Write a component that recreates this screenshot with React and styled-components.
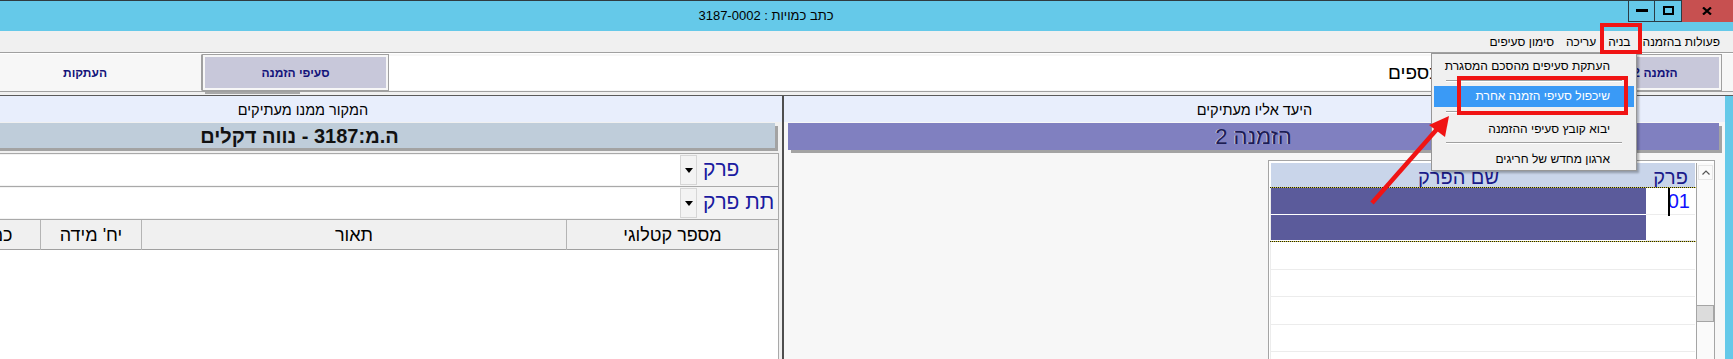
import React from "react";
import styled, { createGlobalStyle } from "styled-components";

const Global = createGlobalStyle`
  html, body { margin: 0; padding: 0; overflow: hidden; background: #f0f0f0; }
  * { box-sizing: border-box; }
`;

const FONT = `"Liberation Sans", "DejaVu Sans", Arial, sans-serif`;

const Window = styled.div`
  position: relative;
  width: 1733px;
  height: 359px;
  overflow: hidden;
  font-family: ${FONT};
  background: #f0f0f0;
  display: flex;
  flex-direction: column;
`;

const TitleBar = styled.div`
  height: 31px;
  border-top: 1px solid #2f3b40;
  background: #65c9e9;
  display: flex;
  align-items: flex-start;
  flex-shrink: 0;
`;

const TitleText = styled.div`
  flex: 1;
  direction: rtl;
  text-align: center;
  padding-right: 96px;
  font-size: 13px;
  line-height: 29px;
  color: #000;
`;

const Controls = styled.div`
  display: flex;
  height: 21px;
  margin-top: -1px;
`;

const CtrlBtn = styled.div`
  width: ${(p) => p.$w}px;
  height: 22px;
  display: flex;
  align-items: center;
  justify-content: center;
  background: ${(p) => (p.$close ? "#c75050" : "transparent")};
  border: 1px solid ${(p) => (p.$close ? "#c75050" : "#2b3b44")};
  border-left-width: ${(p) => (p.$first ? 1 : 0)}px;
  border-top: none;
`;

const MenuBar = styled.div`
  height: 22px;
  flex-shrink: 0;
  display: flex;
  direction: rtl;
  padding-right: 7px;
  background: #f0f0f0;
  border-bottom: 1px solid #a0a0a0;
`;

const MenuItem = styled.div`
  padding: 0 6px;
  font-size: 12px;
  line-height: 22px;
  color: #000;
  white-space: nowrap;
`;

const TabsRow = styled.div`
  height: 39px;
  flex-shrink: 0;
  display: flex;
  background: #f7f7f7;
  border-top: 1px solid #ffffff;
  border-bottom: 1px solid #a0a0a0;
`;

const Tab = styled.div`
  width: ${(p) => p.$w}px;
  flex-shrink: 0;
  display: flex;
  padding: 2px;
  border: 1px solid ${(p) => (p.$sel ? "#a0a0a0" : "transparent")};
  border-right-color: #a0a0a0;
`;

const TabFace = styled.div`
  flex: 1;
  display: flex;
  align-items: center;
  justify-content: center;
  padding-right: ${(p) => p.$pr || 0}px;
  background: ${(p) => (p.$sel ? "#c8c8da" : "transparent")};
  direction: rtl;
  font-size: 12px;
  font-weight: bold;
  color: #14147a;
`;

const Field = styled.div`
  flex: 1;
  background: #fff;
  margin: 2px 0 1px;
  direction: rtl;
  text-align: left;
  padding-left: 999px;
  font-size: 19px;
  line-height: 33px;
  color: #000;
  white-space: nowrap;
  overflow: hidden;
`;

const TabTail = styled.div`
  width: 11px;
  flex-shrink: 0;
`;

const TabGap = styled.div`
  height: 4px;
  flex-shrink: 0;
  background: #f0f0f0;
  border-bottom: 1px solid #5a5a5a;
  display: flex;
`;

const TabMark = styled.div`
  width: 95px;
  height: 2px;
  margin-left: 205px;
  background: #a8a8a8;
`;

const Panels = styled.div`
  flex: 1;
  display: flex;
  min-height: 0;
`;

const LeftPanel = styled.div`
  width: 958px;
  margin-left: -176px;
  flex-shrink: 0;
  display: flex;
  flex-direction: column;
  background: #f0f0f0;
`;

const Divider = styled.div`
  width: 2px;
  flex-shrink: 0;
  background: #4e4e4e;
`;

const RightPanel = styled.div`
  flex: 1;
  display: flex;
  flex-direction: column;
  background: #f7f7f7;
`;

const Frame = styled.div`
  width: 8px;
  flex-shrink: 0;
  background: #65c9e9;
`;

const PanelHeader = styled.div`
  height: 26px;
  flex-shrink: 0;
  background: #e8eefc;
  direction: rtl;
  text-align: center;
  font-size: 14.5px;
  line-height: 29px;
  color: #000;
`;

const Bar = styled.div`
  height: ${(p) => p.$h}px;
  margin: 1px ${(p) => p.$mr}px 0 ${(p) => p.$ml}px;
  background: ${(p) => p.$bg};
  box-shadow: 3px 3px 0 #a3a3a3;
  direction: rtl;
  text-align: center;
  white-space: nowrap;
  flex-shrink: 0;
`;

const SourceTitle = styled.span`
  font-size: 20px;
  font-weight: bold;
  line-height: 27px;
  color: #111;
`;

const TargetTitle = styled.span`
  font-size: 22px;
  line-height: 28px;
  color: #1c1c55;
  text-shadow: -1px 0 0 rgba(255, 255, 255, 0.55);
`;

const SourceBody = styled.div`
  flex: 1;
  margin: 5px 3px 0 0;
  border-right: 1px solid #a9a9a9;
  display: flex;
  flex-direction: column;
  background: #f3f3f3;
`;

const FormRow = styled.div`
  height: 33px;
  flex-shrink: 0;
  display: grid;
  grid-template-columns: 1fr 17px 81px;
  border-top: 1px solid #a9a9a9;
  padding: 1px 0 2px;
`;

const ComboBox = styled.div`
  background: #fff;
`;

const DropBtn = styled.div`
  display: flex;
  align-items: center;
  justify-content: center;
  background: #f3f3f3;
  border: 1px solid #d6d6d6;
`;

const Label = styled.div`
  padding: 0 0 2px 6px;
  text-align: left;
  direction: ltr;
  font-size: 21px;
  line-height: 28px;
  color: #1a1aa0;
  white-space: nowrap;
`;

const SrcGrid = styled.div`
  flex: 1;
  display: flex;
  flex-direction: column;
  background: #fff;
  border-top: 1px solid #a9a9a9;
`;

const SrcHead = styled.div`
  height: 30px;
  flex-shrink: 0;
  display: grid;
  direction: rtl;
  grid-template-columns: 212px 425px 101px 95px 1fr;
  background: #f0f0f0;
  border-bottom: 1px solid #a0a0a0;
`;

const SrcHeadCell = styled.div`
  border-left: 1px solid #b4b4b4;
  text-align: center;
  font-size: 18px;
  line-height: 30px;
  color: #000;
  white-space: nowrap;
`;

const TargetBody = styled.div`
  flex: 1;
  display: flex;
  justify-content: flex-end;
  padding: 10px 10px 0 0;
  min-height: 0;
`;

const GridBox = styled.div`
  width: 447px;
  border: 1px solid #a5a5a5;
  border-bottom: none;
  padding: 2px 0 0 1px;
  background: #fff;
  display: flex;
`;

const Table = styled.div`
  flex: 1;
  display: flex;
  flex-direction: column;
`;

const Row = styled.div`
  display: grid;
  grid-template-columns: 376px 49px;
  height: ${(p) => p.$h || 27}px;
  flex-shrink: 0;
`;

const HeadCell = styled.div`
  background: #c9d5ea;
  border-left: ${(p) => (p.$sep ? "1px solid #fff" : "none")};
  direction: rtl;
  text-align: center;
  font-size: 20px;
  line-height: 22px;
  padding-top: 3px;
  color: #1b1b8a;
  white-space: nowrap;
`;

const FocusLine = styled.div`
  height: 1px;
  flex-shrink: 0;
  background: repeating-linear-gradient(90deg, #1a1a1a 0 1px, #d8d040 1px 2px);
`;

const Cell = styled.div`
  background: ${(p) => (p.$sel ? "#5b5b9b" : "#fff")};
  border-bottom: 1px solid ${(p) => (p.$sel ? "#ffffff" : "#ececec")};
  border-left: ${(p) => (p.$sep ? "1px solid #ececec" : "none")};
  display: flex;
  align-items: center;
  justify-content: flex-end;
  padding-right: 5px;
`;

const Code = styled.span`
  position: relative;
  font-size: 20px;
  color: #1010ff;
  &::before {
    content: "";
    position: absolute;
    left: 0;
    top: -2px;
    bottom: -3px;
    width: 2px;
    background: #000;
  }
`;

const Scroll = styled.div`
  width: 18px;
  flex-shrink: 0;
  background: #fafafa;
  border-left: 1px solid #a5a5a5;
  display: flex;
  flex-direction: column;
  padding-top: 2px;
  gap: 125px;
`;

const ScrollUp = styled.div`
  height: 15px;
  margin: 0 1px;
  border: 1px solid #e6e6e6;
  display: flex;
  align-items: center;
  justify-content: center;
`;

const Thumb = styled.div`
  height: 17px;
  background: #dcdcdc;
  border: 1px solid #a5a5a5;
  margin-left: -1px;
`;

const Popup = styled.div`
  position: absolute;
  left: 1431px;
  top: 53px;
  width: 206px;
  background: #f0f0f0;
  border: 1px solid #979797;
  box-shadow: 2px 2px 2px rgba(0, 0, 0, 0.28);
  padding: 2px 2px 0;
  display: flex;
  flex-direction: column;
  direction: rtl;
`;

const PopItem = styled.div`
  height: ${(p) => p.$h}px;
  padding-right: 24px;
  font-size: 12px;
  line-height: ${(p) => p.$h}px;
  white-space: nowrap;
  color: ${(p) => (p.$hot ? "#fff" : "#000")};
  background: ${(p) => (p.$hot ? "#3a9af6" : "transparent")};
`;

const PopSep = styled.div`
  height: 1px;
  margin: ${(p) => p.$t}px 12px ${(p) => p.$b}px;
  background: #a0a0a0;
  border-bottom: 1px solid #fff;
  box-sizing: content-box;
`;

const RedBox = styled.div`
  position: absolute;
  left: ${(p) => p.$x}px;
  top: ${(p) => p.$y}px;
  width: ${(p) => p.$w}px;
  height: ${(p) => p.$h}px;
  border: 4px solid #f01414;
  pointer-events: none;
`;

const Arrow = styled.svg`
  position: absolute;
  left: 0;
  top: 0;
  pointer-events: none;
`;

const Caret = () => (
  <svg width="8" height="5" viewBox="0 0 8 5">
    <path d="M0 0 L8 0 L4 5 Z" fill="#000" />
  </svg>
);

export default function App() {
  return (
    <>
      <Global />
      <Window>
        <TitleBar>
          <TitleText>כתב כמויות : 3187-0002</TitleText>
          <Controls>
            <CtrlBtn $w={27} $first>
              <svg width="12" height="4" viewBox="0 0 12 4">
                <rect x="0" y="0" width="12" height="3" fill="#000" />
              </svg>
            </CtrlBtn>
            <CtrlBtn $w={27}>
              <svg width="11" height="9" viewBox="0 0 11 9">
                <rect x="1" y="1" width="9" height="7" fill="none" stroke="#000" strokeWidth="2" />
              </svg>
            </CtrlBtn>
            <CtrlBtn $w={51} $close>
              <svg width="10" height="8" viewBox="0 0 10 8">
                <path d="M1 0.5 L9 7.5 M9 0.5 L1 7.5" stroke="#000" strokeWidth="2.2" />
              </svg>
            </CtrlBtn>
          </Controls>
        </TitleBar>

        <MenuBar>
          <MenuItem>פעולות בהזמנה</MenuItem>
          <MenuItem>בניה</MenuItem>
          <MenuItem>עריכה</MenuItem>
          <MenuItem>סימון סעיפים</MenuItem>
        </MenuBar>

        <TabsRow>
          <Tab $w={202}>
            <TabFace $pr={32}>העתקות</TabFace>
          </Tab>
          <Tab $w={187} $sel>
            <TabFace $sel>סעיפי הזמנה</TabFace>
          </Tab>
          <Field>הזמנה 2 - כספים</Field>
          <Tab $w={133} $sel>
            <TabFace $sel>הזמנה 2</TabFace>
          </Tab>
          <TabTail />
        </TabsRow>
        <TabGap>
          <TabMark />
        </TabGap>

        <Panels>
          <LeftPanel>
            <PanelHeader>המקור ממנו מעתיקים</PanelHeader>
            <Bar $h={25} $mr={7} $ml={0} $bg="#bfcdda">
              <SourceTitle>ה.מ:3187 - נווה דקלים</SourceTitle>
            </Bar>
            <SourceBody>
              <FormRow>
                <ComboBox />
                <DropBtn>
                  <Caret />
                </DropBtn>
                <Label>פרק</Label>
              </FormRow>
              <FormRow>
                <ComboBox />
                <DropBtn>
                  <Caret />
                </DropBtn>
                <Label>תת פרק</Label>
              </FormRow>
              <SrcGrid>
                <SrcHead>
                  <SrcHeadCell>מספר קטלוגי</SrcHeadCell>
                  <SrcHeadCell>תאור</SrcHeadCell>
                  <SrcHeadCell>יח' מידה</SrcHeadCell>
                  <SrcHeadCell>כמות</SrcHeadCell>
                  <SrcHeadCell>מחיר</SrcHeadCell>
                </SrcHead>
              </SrcGrid>
            </SourceBody>
          </LeftPanel>

          <Divider />

          <RightPanel>
            <PanelHeader>היעד אליו מעתיקים</PanelHeader>
            <Bar $h={27} $mr={6} $ml={4} $bg="#8080c0">
              <TargetTitle>הזמנה 2</TargetTitle>
            </Bar>
            <TargetBody>
              <GridBox>
                <Table>
                  <Row $h={24}>
                    <HeadCell $sep>שם הפרק</HeadCell>
                    <HeadCell>פרק</HeadCell>
                  </Row>
                  <FocusLine />
                  <Row>
                    <Cell $sel $sep />
                    <Cell>
                      <Code>01</Code>
                    </Cell>
                  </Row>
                  <Row $h={26}>
                    <Cell $sel $sep />
                    <Cell />
                  </Row>
                  <FocusLine />
                  <Row $h={28}>
                    <Cell $sep />
                    <Cell />
                  </Row>
                  <Row $h={27}>
                    <Cell $sep />
                    <Cell />
                  </Row>
                  <Row $h={28}>
                    <Cell $sep />
                    <Cell />
                  </Row>
                  <Row $h={27}>
                    <Cell $sep />
                    <Cell />
                  </Row>
                  <Row $h={27}>
                    <Cell $sep />
                    <Cell />
                  </Row>
                </Table>
                <Scroll>
                  <ScrollUp>
                    <svg width="8" height="5" viewBox="0 0 8 5">
                      <path d="M0.5 4.5 L4 1 L7.5 4.5" fill="none" stroke="#555" strokeWidth="1.2" />
                    </svg>
                  </ScrollUp>
                  <Thumb />
                </Scroll>
              </GridBox>
            </TargetBody>
          </RightPanel>
          <Frame />
        </Panels>

        <Popup>
          <PopItem $h={21}>העתקת סעיפים מהסכם המסגרת</PopItem>
          <PopSep $t={3} $b={4} />
          <PopItem $h={21} $hot>שיכפול סעיפי הזמנה אחרת</PopItem>
          <PopSep $t={4} $b={5} />
          <PopItem $h={22}>יבוא קובץ סעיפי ההזמנה</PopItem>
          <PopSep $t={2} $b={4} />
          <PopItem $h={22}>ארגון מחדש של חריגים</PopItem>
        </Popup>

        <RedBox $x={1600} $y={23} $w={42} $h={31} />
        <RedBox $x={1457} $y={76} $w={171} $h={39} />

        <Arrow width="1733" height="359" viewBox="0 0 1733 359">
          <line x1="1372" y1="203" x2="1438" y2="128" stroke="#f01414" strokeWidth="4.5" />
          <polygon points="1449,116 1429,125 1445,137" fill="#f01414" />
        </Arrow>
      </Window>
    </>
  );
}
